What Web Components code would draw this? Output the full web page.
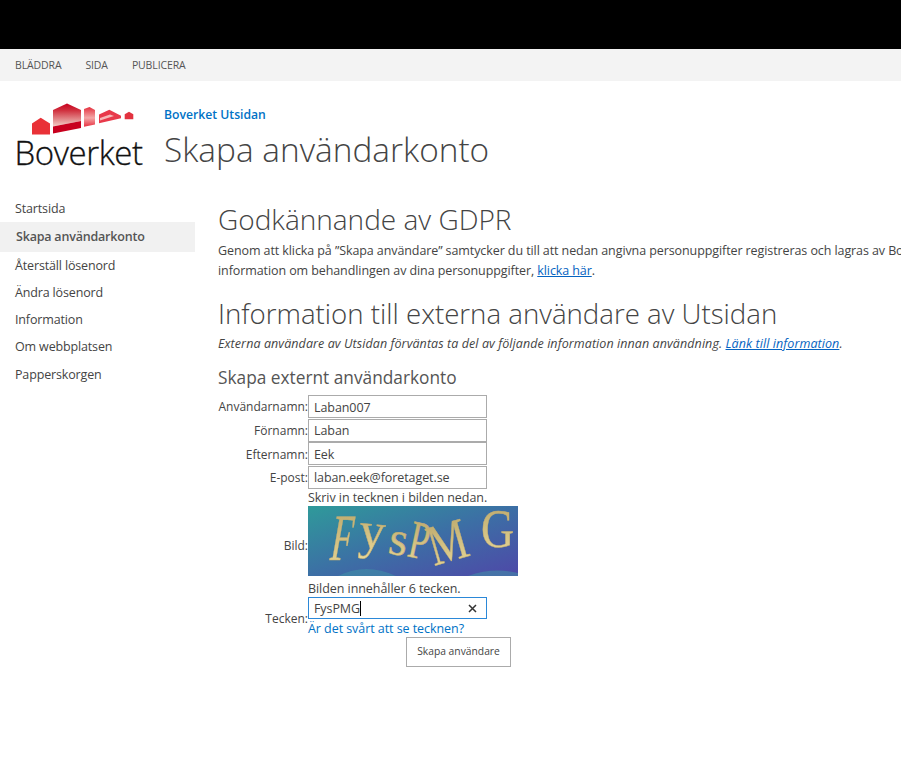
<!DOCTYPE html>
<html lang="sv"><head><meta charset="utf-8"><title>Skapa användarkonto</title>
<style>
html,body{margin:0;padding:0;background:#fff;width:901px;height:771px;overflow:hidden}
body{font-family:"Open Sans","Noto Sans",sans-serif;color:#444}
</style></head><body>
<sp-page></sp-page>
<script>
function def(name,html){customElements.define(name,class extends HTMLElement{
 constructor(){super();this.attachShadow({mode:'open'}).innerHTML=html;}
});}
def('sp-ribbon',`<style>
:host{display:block}
.black{height:49px;background:#000}
.tabs{height:32px;background:#f3f3f3;display:flex;gap:24px;padding-left:15px;align-items:center;font-size:10.5px;color:#555;letter-spacing:-.12px}
</style><div class="black"></div><div class="tabs"><span>BLÄDDRA</span><span>SIDA</span><span>PUBLICERA</span></div>`);
def('sp-logo',`<style>
:host{display:block;width:130px;height:64px;flex:none}
svg{display:block;overflow:visible}
text{font-family:"Open Sans",sans-serif;font-size:33px;fill:#111;stroke:#111;stroke-width:.3px;font-weight:300;letter-spacing:-.4px}
</style><svg width="130" height="64" viewBox="0 0 130 64">
<defs><linearGradient id="g" x1="0" y1="0" x2="0" y2="1"><stop offset="0" stop-color="#c8001e"/><stop offset=".3" stop-color="#d0303e"/><stop offset="1" stop-color="#f2d0c8"/></linearGradient>
<linearGradient id="h" x1="0" y1="0" x2="0" y2="1"><stop offset="0" stop-color="#e4303e"/><stop offset=".55" stop-color="#f4a8a8"/><stop offset="1" stop-color="#e83040"/></linearGradient></defs>
<path d="M17 20.500L25.700 14.700 35 20.500V31.500H17Z" fill="#e93137"/>
<path d="M38 7L52 .5 66 7V18L38 23.500Z" fill="url(#g)"/>
<path d="M38 23.500L66 18V25L38 30.500Z" fill="#c8001e"/>
<path d="M69 6L74.500 4 80 7V21.500L69 23.800Z" fill="url(#h)"/>
<path d="M84 11.500L94.300 6.700 106 12.700V15.300L84 20.300Z" fill="#e8394a"/>
<path d="M85 15L95 11.500 99 13 85 17.500Z" fill="#f6b8b8"/>
<path d="M109.700 11.300L114 8.700 118.300 11.300V16.300H109.700Z" fill="#e2323f"/>
<text x="-.5" y="62">Boverket</text></svg>`);
def('sp-header',`<style>
:host{display:flex;padding:22px 0 0 15px;gap:19px;height:90px;box-sizing:content-box}
.t{display:flex;flex-direction:column}
.site{font-size:12.200px;font-weight:600;color:#0072c6;margin-top:3px;line-height:17px}
.page{font-size:33.400px;font-weight:300;color:#444;line-height:46px;margin-top:3px;white-space:nowrap}
</style><sp-logo></sp-logo><div class="t"><div class="site">Boverket Utsidan</div><div class="page">Skapa användarkonto</div></div>`);
def('sp-nav',`<style>
:host{display:flex;flex-direction:column;width:195px;flex:none;font-size:12.500px;color:#444;padding-top:2px;letter-spacing:-.15px}
div{padding-left:15px;height:27px;line-height:27px;white-space:nowrap}
div:first-child{height:26px}
div:last-child{margin-top:1px}
.sel{height:30px;line-height:30px;background:#f1f1f1;font-weight:600;padding-left:16px;color:#555;letter-spacing:-.2px}
</style><div>Startsida</div><div class="sel">Skapa användarkonto</div><div>Återställ lösenord</div><div>Ändra lösenord</div><div>Information</div><div>Om webbplatsen</div><div>Papperskorgen</div>`);
def('sp-field',`<style>
:host{display:flex;align-items:center;box-sizing:border-box;width:179px;height:23px;border:1px solid #ababab;padding:1px 5px 0;font-size:12.500px;letter-spacing:-.08px;color:#444;background:#fff;justify-content:space-between;margin-bottom:.67px}
:host([focus]){border-color:#2b88d8;height:22px;margin-bottom:0}
svg{margin-right:4px;display:none}
:host([focus]) svg{display:block}
:host([focus]) .c2{display:inline-block}
.c2{display:none;width:1px;height:15px;background:#000;vertical-align:-3px}
</style><span><slot></slot><span class="c2"></span></span><svg width="9" height="9" viewBox="0 0 9 9"><path d="M1 1l7 7M8 1l-7 7" stroke="#333" stroke-width="1.500" fill="none"/></svg>`);
def('sp-captcha',`<style>
:host{display:block;width:210px;height:70px}
svg{display:block}
text{font-family:"Liberation Serif",serif;font-weight:400;stroke:#c8b070;stroke-width:.5px;fill:url(#gold)}
</style><svg width="210" height="70" viewBox="0 0 210 70">
<defs><linearGradient id="bg" x1="0" y1="0" x2="1" y2="1"><stop offset="0" stop-color="#2f9a9a"/><stop offset=".5" stop-color="#3c6fa5"/><stop offset="1" stop-color="#4e48a8"/></linearGradient>
<linearGradient id="gold" x1="0" y1="0" x2="0" y2="1"><stop offset="0" stop-color="#b8a468"/><stop offset="1" stop-color="#e8d898"/></linearGradient></defs>
<rect width="210" height="70" fill="url(#bg)"/>
<path d="M30 70q28-14 58 0zM160 70q25-9 50-3v3z" fill="#3f97a8" opacity=".5"/>
<text font-size="66" transform="translate(20,54) skewX(-10) scale(.58,1)">F</text>
<text font-size="52" transform="translate(50,41) rotate(5)">y</text>
<text font-size="48" transform="translate(79,47) rotate(10)">s</text>
<text font-size="54" transform="translate(98,50) rotate(12) scale(.66,1)">P</text>
<text font-size="58" transform="translate(126,60) rotate(-16) scale(.76,1)">M</text>
<text font-size="54" transform="translate(173,41) scale(.85,1)">G</text>
</svg>`);
def('sp-form',`<style>
:host{display:grid;grid-template-columns:90px 210px;font-size:12.500px;color:#444;margin-top:5px;line-height:17px}
.l{text-align:right;white-space:nowrap;display:flex;align-items:center;justify-content:flex-end;font-size:12px}
.r{display:flex;flex-direction:column;letter-spacing:-.06px}
a{color:#0072c6;text-decoration:none;margin-top:1px}
.btn{grid-column:1/3;margin:0 0 0 188px;box-sizing:border-box;width:105px;height:30px;border:1px solid #ababab;font-size:10.300px;display:flex;align-items:center;justify-content:center;color:#444;background:#fff}
</style>
<div class="l">Användarnamn:</div><div class="r"><sp-field>Laban007</sp-field></div>
<div class="l">Förnamn:</div><div class="r"><sp-field>Laban</sp-field></div>
<div class="l">Efternamn:</div><div class="r"><sp-field>Eek</sp-field></div>
<div class="l">E-post:</div><div class="r"><sp-field>laban.eek@foretaget.se</sp-field></div>
<div class="l" style="padding-top:4px">Bild:</div>
<div class="r" style="margin-top:-.67px"><span>Skriv in tecknen i bilden nedan.</span><sp-captcha></sp-captcha><span style="margin-top:4px">Bilden innehåller 6 tecken.</span></div>
<div class="l" style="padding-top:3px">Tecken:</div><div class="r"><sp-field focus>FysPMG</sp-field><a>Är det svårt att se tecknen?</a></div>
<div class="btn">Skapa användare</div>`);
def('sp-main',`<style>
:host{display:block;padding:0 0 0 23px;flex:1;min-width:0;white-space:nowrap;overflow:hidden}
h1,h3{font-weight:300;margin:0;color:#444}
h1{font-size:28px;line-height:36px;margin-top:8px}
h1.x{font-size:27.650px;margin-top:14px}
p{margin:0;font-size:12.500px;line-height:20px;color:#444;letter-spacing:-.09px}
p.i{font-style:italic;letter-spacing:.08px;margin-top:3px}
a{color:#0563c1;text-decoration:underline}
h3{font-size:17.300px;line-height:24px;margin-top:12px;color:#555;font-weight:400}
</style>
<h1>Godkännande av GDPR</h1>
<p style="margin-top:4px">Genom att klicka på ”Skapa användare” samtycker du till att nedan angivna personuppgifter registreras och lagras av Bo</p>
<p>information om behandlingen av dina personuppgifter, <a>klicka här</a>.</p>
<h1 class="x">Information till externa användare av Utsidan</h1>
<p class="i">Externa användare av Utsidan förväntas ta del av följande information innan användning. <a>Länk till information</a>.</p>
<h3>Skapa externt användarkonto</h3>
<sp-form></sp-form>`);
def('sp-page',`<style>
:host{display:block;width:901px;height:771px;overflow:hidden}
.b{display:flex}
</style><sp-ribbon></sp-ribbon><sp-header></sp-header><div class="b"><sp-nav></sp-nav><sp-main></sp-main></div>`);
</script></body></html>
